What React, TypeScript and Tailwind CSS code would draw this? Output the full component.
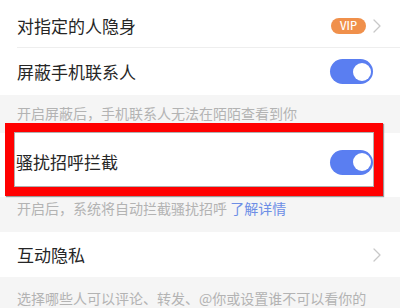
import React from 'react';

const font = { fontFamily: '"Noto Sans CJK SC", "Noto Sans", sans-serif' };

const Chevron: React.FC = () => (
  <svg width="8" height="14" viewBox="0 0 8 14" fill="none" aria-hidden>
    <polyline points="1,1 7,7 1,13" stroke="#c8c8c8" strokeWidth="1.3" strokeLinecap="round" strokeLinejoin="round" />
  </svg>
);

const Toggle: React.FC = () => (
  <div className="flex h-[25px] w-[43px] items-center justify-end rounded-full bg-[#5a7ef1] pr-[2px]">
    <div className="h-[18px] w-[18px] rounded-full bg-white" />
  </div>
);

const Note: React.FC<{ className?: string; children: React.ReactNode }> = ({ className, children }) => (
  <div className={`bg-[#f5f5f5] px-[17px] text-[14px] leading-[20px] text-[#b3b3b3] ${className ?? ''}`}>{children}</div>
);

export default function App() {
  return (
    <div className="h-[308px] w-[400px] overflow-hidden bg-[#f5f5f5] text-[#262626]" style={font}>
      <div className="bg-white pl-[17px]">
        <div className="flex h-[48px] items-center justify-between border-b border-[#eeeeee] pr-[19px] pt-[4px]">
          <span className="text-[17px]">对指定的人隐身</span>
          <div className="flex items-center gap-[7px]">
            <span className="flex h-[16px] w-[35px] items-center justify-center rounded-full bg-[#f0904b] text-[11px] font-medium text-white">
              VIP
            </span>
            <Chevron />
          </div>
        </div>
        <div className="flex h-[47px] items-center justify-between pr-[27px]">
          <span className="text-[17px]">屏蔽手机联系人</span>
          <Toggle />
        </div>
      </div>

      <Note className="h-[38px] pt-[8px]">开启屏蔽后，手机联系人无法在陌陌查看到你</Note>

      <div className="relative flex h-[64px] items-center justify-between bg-white pb-[6px] pl-[16px] pr-[27px]">
        <span className="text-[17px]">骚扰招呼拦截</span>
        <Toggle />
        <div className="absolute left-[5px] right-[17px] top-[-10px] bottom-[1px] border-[9px] border-[#ff0000] shadow-[inset_0_0_0_1px_#b0b0b0,1px_1px_1px_#9a9a9a]" />
      </div>

      <Note className="h-[35px] pt-[1px]">
        开启后，系统将自动拦截骚扰招呼 <span className="text-[#6d8ee6]">了解详情</span>
      </Note>

      <div className="flex h-[45px] items-center justify-between bg-white pl-[17px] pr-[19px]">
        <span className="text-[17px]">互动隐私</span>
        <Chevron />
      </div>

      <Note className="pt-[11px] whitespace-nowrap">选择哪些人可以评论、转发、@你或设置谁不可以看你的</Note>
    </div>
  );
}
